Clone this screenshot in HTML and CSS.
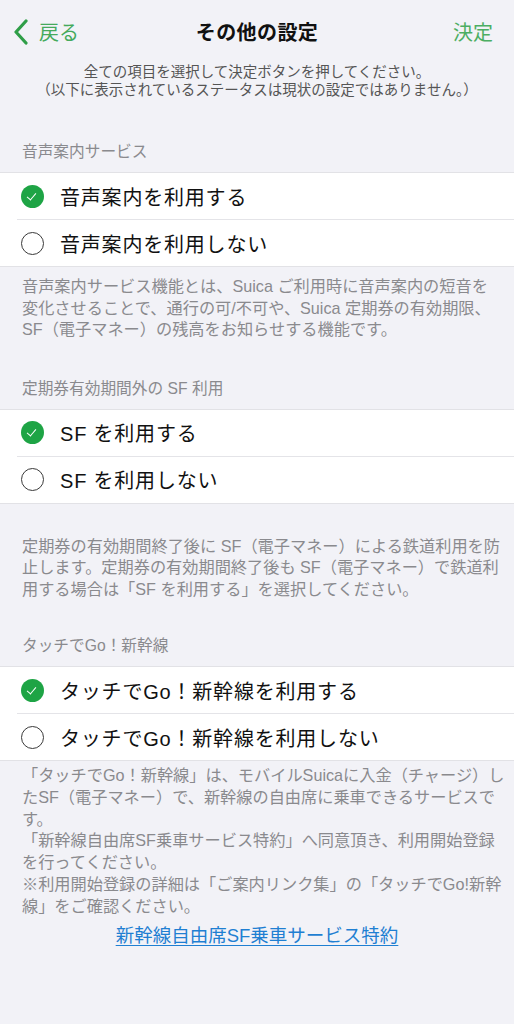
FILE: index.html
```html
<!DOCTYPE html>
<html lang="ja">
<head>
<meta charset="utf-8">
<title>その他の設定</title>
<link rel="stylesheet" href="styles.css">
</head>
<body>
<header class="nav">
  <a class="nav-back" href="#">
    <svg class="chevron" width="16" height="26" viewBox="0 0 16 26"><path d="M13 2 L3 13 L13 24" fill="none" stroke="#2f9e48" stroke-width="3.2" stroke-linecap="round" stroke-linejoin="round"/></svg>
    <span>戻る</span>
  </a>
  <h1 class="nav-title">その他の設定</h1>
  <a class="nav-done" href="#">決定</a>
</header>

<p class="intro">全ての項目を選択して決定ボタンを押してください。<br>（以下に表示されているステータスは現状の設定ではありません。）</p>

<section class="group group-voice">
  <h2 class="group-title">音声案内サービス</h2>
  <ul class="options">
    <li class="option is-checked"><span class="radio"></span><span class="label">音声案内を利用する</span></li>
    <li class="option"><span class="radio"></span><span class="label">音声案内を利用しない</span></li>
  </ul>
  <p class="note">音声案内サービス機能とは、Suica ご利用時に音声案内の短音を<br>変化させることで、通行の可/不可や、Suica 定期券の有効期限、<br>SF（電子マネー）の残高をお知らせする機能です。</p>
</section>

<section class="group group-sf">
  <h2 class="group-title">定期券有効期間外の SF 利用</h2>
  <ul class="options">
    <li class="option is-checked"><span class="radio"></span><span class="label">SF を利用する</span></li>
    <li class="option"><span class="radio"></span><span class="label">SF を利用しない</span></li>
  </ul>
  <p class="note note-spaced">定期券の有効期間終了後に SF（電子マネー）による鉄道利用を防<br>止します。定期券の有効期間終了後も SF（電子マネー）で鉄道利<br>用する場合は「SF を利用する」を選択してください。</p>
</section>

<section class="group group-go">
  <h2 class="group-title">タッチでGo！新幹線</h2>
  <ul class="options">
    <li class="option is-checked"><span class="radio"></span><span class="label">タッチでGo！新幹線を利用する</span></li>
    <li class="option"><span class="radio"></span><span class="label">タッチでGo！新幹線を利用しない</span></li>
  </ul>
  <p class="note note-tight">「タッチでGo！新幹線」は、モバイルSuicaに入金（チャージ）し<br>たSF（電子マネー）で、新幹線の自由席に乗車できるサービスで<br>す。<br>「新幹線自由席SF乗車サービス特約」へ同意頂き、利用開始登録<br>を行ってください。<br>※利用開始登録の詳細は「ご案内リンク集」の「タッチでGo!新幹<br>線」をご確認ください。</p>
</section>

<p class="terms"><a href="#">新幹線自由席SF乗車サービス特約</a></p>
</body>
</html>
```

FILE: styles.css
```css
* { box-sizing: border-box; }

html, body {
  margin: 0;
  padding: 0;
}

body {
  background: #f2f2f7;
  font-family: "Liberation Sans", "Noto Sans CJK JP", sans-serif;
  color: #111;
  width: 514px;
  min-height: 1024px;
}

.nav {
  height: 63px;
  display: grid;
  grid-template-columns: 1fr auto 1fr;
  align-items: center;
  padding: 0 21px;
}

.nav-back {
  display: flex;
  align-items: center;
  gap: 10px;
  color: #45aa5c;
  text-decoration: none;
  font-size: 20px;
  justify-self: start;
  margin-left: -8px;
}

.nav-back .chevron {
  display: block;
  margin-top: 1px;
}

.nav-title {
  margin: 0;
  font-size: 20px;
  font-weight: 700;
  color: #111;
  letter-spacing: 0.4px;
}

.nav-done {
  justify-self: end;
  color: #4cae62;
  text-decoration: none;
  font-size: 20px;
}

.intro {
  margin: 0;
  text-align: center;
  font-size: 14.5px;
  line-height: 18px;
  color: #555;
}

.group-title {
  margin: 0;
  font-weight: 400;
  font-size: 15.7px;
  line-height: 20px;
  color: #8a8a8e;
  padding: 0 22px 10px;
}

.group-voice .group-title { margin-top: 43px; }
.group-sf .group-title { margin-top: 38px; }
.group-go .group-title { margin-top: 36px; }

.options {
  list-style: none;
  margin: 0;
  padding: 0;
  background: #fff;
  border-top: 1px solid #e2e2e6;
  border-bottom: 1px solid #e2e2e6;
}

.option {
  display: flex;
  align-items: center;
  height: 46px;
  padding-left: 21px;
  gap: 16px;
  font-size: 20px;
  letter-spacing: 0.8px;
}

.option + .option {
  border-top: 1px solid #e4e4e8;
  margin-left: 17px;
  padding-left: 4px;
  height: 47px;
}

.radio {
  width: 23px;
  height: 23px;
  border-radius: 50%;
  border: 1.3px solid #3a3a3a;
  flex: none;
  position: relative;
}

.is-checked .radio {
  border: none;
  background: #1ea445;
}

.is-checked .radio::after {
  content: "";
  position: absolute;
  left: 8px;
  top: 6px;
  width: 4px;
  height: 8px;
  border-right: 1.6px solid #fff;
  border-bottom: 1.6px solid #fff;
  transform: rotate(40deg);
}

.note {
  margin: 0;
  padding: 9px 16px 0 22px;
  font-size: 16.2px;
  line-height: 21.5px;
  color: #8a8a8e;
  white-space: nowrap;
}

.note-spaced { padding-top: 32px; }
.note-tight { padding-top: 4px; line-height: 21.8px; }

.terms {
  margin: 6px 0 0;
  text-align: center;
  font-size: 18.5px;
  line-height: 24px;
}

.terms a {
  color: #1f7fd2;
  text-decoration: underline;
  text-underline-offset: 3px;
}
```
